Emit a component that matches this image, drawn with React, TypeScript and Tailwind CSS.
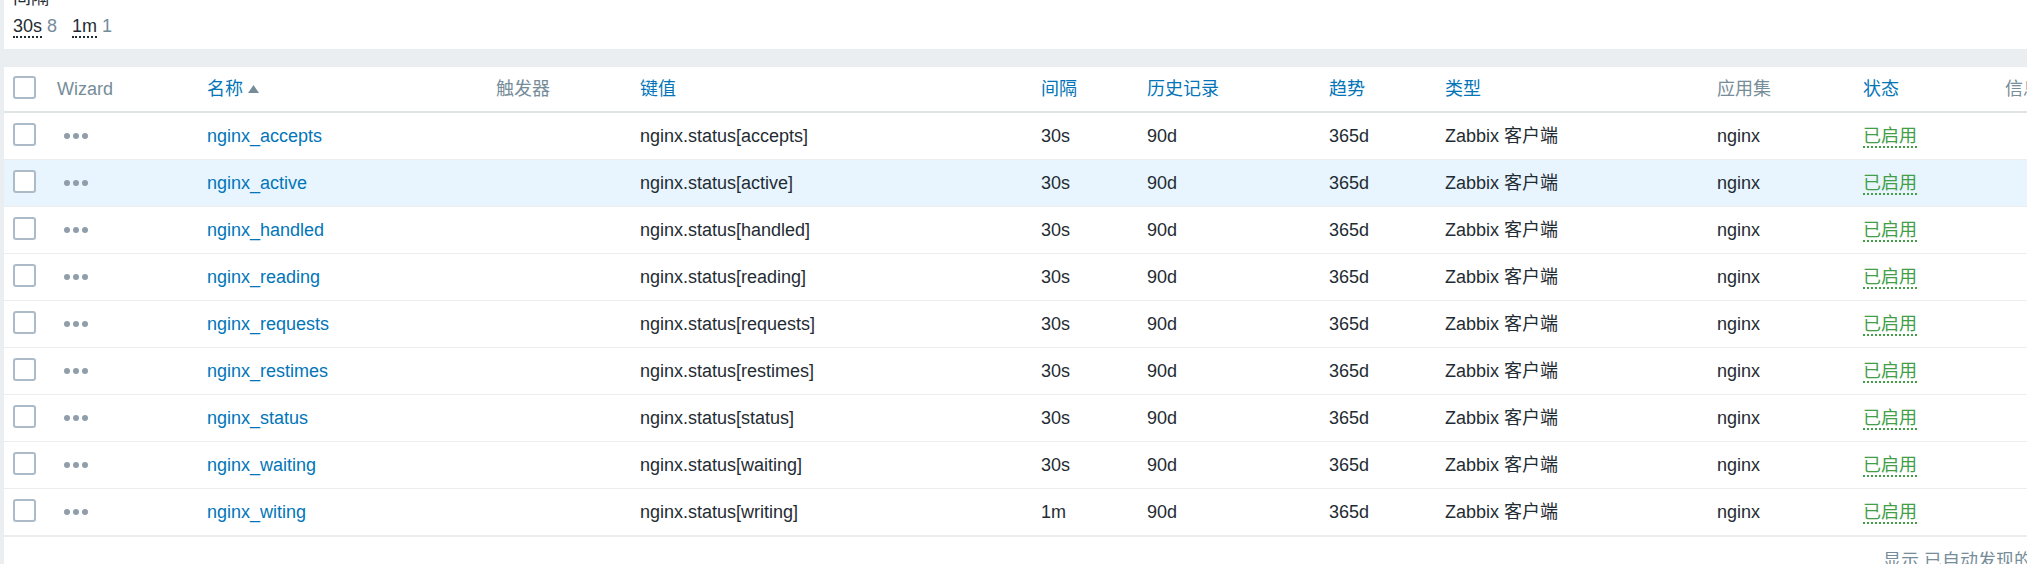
import React from "react";

const rows = [
  { name: "nginx_accepts", key: "nginx.status[accepts]", interval: "30s" },
  { name: "nginx_active", key: "nginx.status[active]", interval: "30s", hover: true },
  { name: "nginx_handled", key: "nginx.status[handled]", interval: "30s" },
  { name: "nginx_reading", key: "nginx.status[reading]", interval: "30s" },
  { name: "nginx_requests", key: "nginx.status[requests]", interval: "30s" },
  { name: "nginx_restimes", key: "nginx.status[restimes]", interval: "30s" },
  { name: "nginx_status", key: "nginx.status[status]", interval: "30s" },
  { name: "nginx_waiting", key: "nginx.status[waiting]", interval: "30s" },
  { name: "nginx_witing", key: "nginx.status[writing]", interval: "1m" },
];

function Checkbox() {
  return <div className="w-[23px] h-[23px] border-2 border-[#acbbc7] rounded-[3px] bg-white" />;
}

function WizardDots() {
  return (
    <div className="flex gap-[3px] pl-[7px]">
      <span className="w-[6px] h-[6px] rounded-full bg-[#8f9eaa]" />
      <span className="w-[6px] h-[6px] rounded-full bg-[#8f9eaa]" />
      <span className="w-[6px] h-[6px] rounded-full bg-[#8f9eaa]" />
    </div>
  );
}

export default function App() {
  return (
    <div className="w-[2027px] h-[564px] overflow-hidden bg-[#ebeef0] pl-[4px] font-['Liberation_Sans','Noto_Sans_CJK_SC',sans-serif] text-[18px] leading-[20px] text-[#1f2c33]">
      {/* Subfilter panel */}
      <div className="bg-white h-[49px] pl-[9px] overflow-hidden">
        <div className="-mt-[12px] text-[#1f2c33]">间隔</div>
        <div className="mt-[8px] flex items-baseline">
          <span className="border-b-2 border-dotted border-[#1f2c33]">30s</span>
          <span className="ml-[5px] mr-[15px] text-[#768d99]">8</span>
          <span className="border-b-2 border-dotted border-[#1f2c33]">1m</span>
          <span className="ml-[5px] text-[#768d99]">1</span>
        </div>
      </div>

      <div className="mt-[18px] bg-white w-[2101px] h-[497px]">
        <table className="table-fixed border-collapse w-[2101px]">
          <colgroup>
            <col className="w-[53px]" />
            <col className="w-[150px]" />
            <col className="w-[289px]" />
            <col className="w-[144px]" />
            <col className="w-[401px]" />
            <col className="w-[106px]" />
            <col className="w-[182px]" />
            <col className="w-[116px]" />
            <col className="w-[272px]" />
            <col className="w-[146px]" />
            <col className="w-[142px]" />
            <col className="w-[100px]" />
          </colgroup>
          <thead>
            <tr className="h-[45px] border-b-2 border-[#dfe4e7] text-left">
              <th className="pl-[9px] font-normal align-middle">
                <div className="-mt-[3px]">
                  <Checkbox />
                </div>
              </th>
              <th className="font-normal text-[#768d99]">Wizard</th>
              <th className="font-normal text-[#0275b8]">
                <span className="inline-flex items-center gap-[5px]">
                  名称
                  <svg width="11" height="8" viewBox="0 0 11 8">
                    <path d="M5.5 0 L11 8 L0 8 Z" fill="#768d99" />
                  </svg>
                </span>
              </th>
              <th className="font-normal text-[#768d99]">触发器</th>
              <th className="font-normal text-[#0275b8]">键值</th>
              <th className="font-normal text-[#0275b8]">间隔</th>
              <th className="font-normal text-[#0275b8]">历史记录</th>
              <th className="font-normal text-[#0275b8]">趋势</th>
              <th className="font-normal text-[#0275b8]">类型</th>
              <th className="font-normal text-[#768d99]">应用集</th>
              <th className="font-normal text-[#0275b8]">状态</th>
              <th className="font-normal text-[#768d99]">信息</th>
            </tr>
          </thead>
          <tbody>
            {rows.map((r) => (
              <tr
                key={r.name}
                className={`h-[47px] border-b border-[#ebeef0] ${r.hover ? "bg-[#e8f5ff]" : "bg-white"}`}
              >
                <td className="pl-[9px]">
                  <div className="-mt-[3px]">
                    <Checkbox />
                  </div>
                </td>
                <td>
                  <WizardDots />
                </td>
                <td className="text-[#0275b8]">{r.name}</td>
                <td></td>
                <td>{r.key}</td>
                <td>{r.interval}</td>
                <td>90d</td>
                <td>365d</td>
                <td>Zabbix 客户端</td>
                <td>nginx</td>
                <td>
                  <span className="text-[#429e47] border-b-2 border-dotted border-[#429e47]">已启用</span>
                </td>
                <td></td>
              </tr>
            ))}
          </tbody>
        </table>
        <div className="border-t border-[#ebeef0] pt-[14px] pr-[12px] flex justify-end text-[#768d99]">
          显示 已自动发现的 9中的9
        </div>
      </div>
    </div>
  );
}
